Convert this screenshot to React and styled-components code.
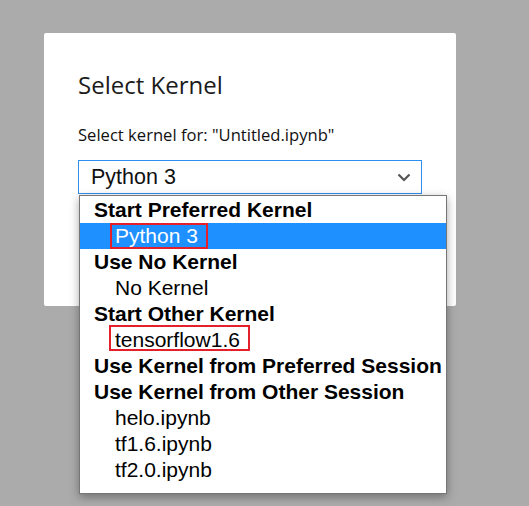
import React from 'react';
import styled, { createGlobalStyle } from 'styled-components';

const GlobalStyle = createGlobalStyle`
  html, body {
    margin: 0;
    padding: 0;
    background: #ababab;
  }
  body {
    height: 506px;
    overflow: hidden;
  }
`;

const Page = styled.div`
  padding: 33px 0 0 44px;
`;

const Dialog = styled.div`
  box-sizing: border-box;
  width: 412px;
  height: 273px;
  background: #fff;
  border-radius: 2px;
  padding: 36px 34px 0;
  font-family: "Open Sans", "Noto Sans", sans-serif;
  color: #1b1b1b;
`;

const Title = styled.h1`
  margin: 0;
  font-size: 24px;
  font-weight: 400;
  line-height: 32px;
`;

const Subtitle = styled.p`
  margin: 23px 0 0;
  font-size: 16.6px;
  line-height: 22px;
  color: #111;
`;

const SelectWrap = styled.div`
  position: relative;
  margin-top: 14px;
  width: 344px;
`;

const SelectBox = styled.div`
  box-sizing: border-box;
  height: 34px;
  border: 1px solid #2f8ff0;
  background: #fff;
  display: flex;
  align-items: center;
  justify-content: space-between;
  padding: 0 10px 0 12px;
  font-family: "Liberation Sans", Arial, sans-serif;
  font-size: 21.5px;
  color: #111;
`;

const Chevron = () => (
  <svg width="14" height="9" viewBox="0 0 14 9">
    <path d="M1.5 1.5 L7 7 L12.5 1.5" fill="none" stroke="#555" strokeWidth="2.2" />
  </svg>
);

const List = styled.ul`
  position: absolute;
  left: 1px;
  top: 35px;
  box-sizing: border-box;
  width: 368px;
  height: 299px;
  margin: 0;
  padding: 1px 0 0;
  list-style: none;
  background: #fff;
  border: 1px solid #767676;
  box-shadow: 0 3px 9px rgba(0, 0, 0, 0.35);
  font-family: "Liberation Sans", Arial, sans-serif;
  font-size: 21px;
  color: #000;
`;

const Row = styled.li`
  height: 26px;
  line-height: 26px;
  white-space: nowrap;
  padding-left: ${p => (p.$group ? '14px' : '35px')};
  font-weight: ${p => (p.$group ? 700 : 400)};
  background: ${p => (p.$active ? '#1e90ff' : 'transparent')};
  color: ${p => (p.$active ? '#fff' : '#000')};
`;

const Marked = styled.span`
  position: relative;
  &::after {
    content: '';
    position: absolute;
    left: ${p => p.$l}px;
    right: -10px;
    top: ${p => p.$t}px;
    bottom: ${p => p.$b}px;
    border: 2px solid #e3202b;
  }
`;

const rows = [
  { label: 'Start Preferred Kernel', group: true },
  { label: 'Python 3', active: true, mark: { l: -5, t: -1, b: -2 } },
  { label: 'Use No Kernel', group: true },
  { label: 'No Kernel' },
  { label: 'Start Other Kernel', group: true },
  { label: 'tensorflow1.6', mark: { l: -6, t: -3, b: 0 } },
  { label: 'Use Kernel from Preferred Session', group: true },
  { label: 'Use Kernel from Other Session', group: true },
  { label: 'helo.ipynb' },
  { label: 'tf1.6.ipynb' },
  { label: 'tf2.0.ipynb' },
];

export default function App() {
  return (
    <Page>
      <GlobalStyle />
      <Dialog>
        <Title>Select Kernel</Title>
        <Subtitle>Select kernel for: "Untitled.ipynb"</Subtitle>
        <SelectWrap>
          <SelectBox>
            <span>Python 3</span>
            <Chevron />
          </SelectBox>
          <List>
            {rows.map(r => (
              <Row key={r.label} $group={r.group} $active={r.active}>
                {r.mark ? (
                  <Marked $l={r.mark.l} $t={r.mark.t} $b={r.mark.b}>{r.label}</Marked>
                ) : (
                  r.label
                )}
              </Row>
            ))}
          </List>
        </SelectWrap>
      </Dialog>
    </Page>
  );
}
